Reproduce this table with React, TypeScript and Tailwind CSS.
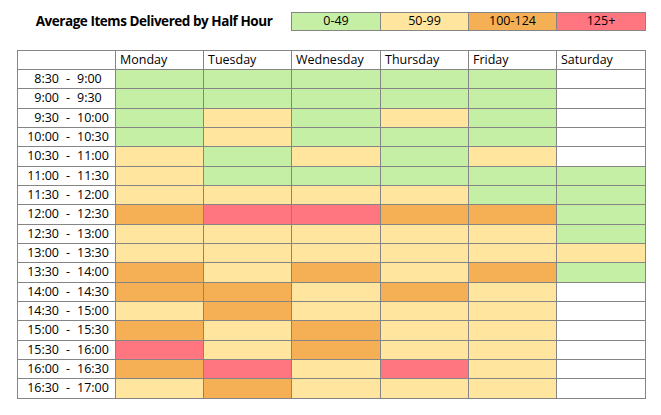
import React from 'react';

type Level = 'G' | 'Y' | 'O' | 'R' | 'W';

const fill: Record<Level, string> = {
  G: 'bg-[#c6efa6]',
  Y: 'bg-[#ffe59d]',
  O: 'bg-[#f5af55]',
  R: 'bg-[#ff7580]',
  W: 'bg-white',
};

const days = ['Monday', 'Tuesday', 'Wednesday', 'Thursday', 'Friday', 'Saturday'];

const rows: { from: string; to: string; cells: string }[] = [
  { from: '8:30', to: '9:00', cells: 'GGGGGW' },
  { from: '9:00', to: '9:30', cells: 'GGGGGW' },
  { from: '9:30', to: '10:00', cells: 'GYGYGW' },
  { from: '10:00', to: '10:30', cells: 'GYGGGW' },
  { from: '10:30', to: '11:00', cells: 'YGYGYW' },
  { from: '11:00', to: '11:30', cells: 'YGGGGG' },
  { from: '11:30', to: '12:00', cells: 'YYYYGG' },
  { from: '12:00', to: '12:30', cells: 'ORROOG' },
  { from: '12:30', to: '13:00', cells: 'YYYYYG' },
  { from: '13:00', to: '13:30', cells: 'YYYYYY' },
  { from: '13:30', to: '14:00', cells: 'OYOYOG' },
  { from: '14:00', to: '14:30', cells: 'OOYOYW' },
  { from: '14:30', to: '15:00', cells: 'YOYYYW' },
  { from: '15:00', to: '15:30', cells: 'OYOYYW' },
  { from: '15:30', to: '16:00', cells: 'RYOYYW' },
  { from: '16:00', to: '16:30', cells: 'ORYRYW' },
  { from: '16:30', to: '17:00', cells: 'YOYYYW' },
];

const legend: { label: string; level: Level }[] = [
  { label: '0-49', level: 'G' },
  { label: '50-99', level: 'Y' },
  { label: '100-124', level: 'O' },
  { label: '125+', level: 'R' },
];

const App: React.FC = () => {
  return (
    <div className="w-[661px] h-[415px] bg-white pt-[12px] pl-[17px] text-[12.5px] text-black font-['Open_Sans',sans-serif] leading-none">
      {/* title + legend */}
      <div className="flex h-[19px]">
        <div className="w-[274px] flex items-center justify-center font-bold text-[13.5px] tracking-[-0.45px]">
          Average Items Delivered by Half Hour
        </div>
        <div className="grid grid-cols-[88px_87px_87px_88px] gap-px p-px bg-[#858585]">
          {legend.map((l) => (
            <div key={l.label} className={`${fill[l.level]} flex items-center justify-center`}>
              {l.label}
            </div>
          ))}
        </div>
      </div>

      {/* schedule grid */}
      <div className="mt-[19px] w-[629px] h-[349px] grid grid-cols-[97px_87px_87px_88px_87px_87px_88px] grid-rows-[repeat(6,18px_18px_19px)] gap-px p-px bg-[#858585]">
        <div className="bg-white" />
        {days.map((d) => (
          <div key={d} className="bg-white flex items-center pl-[4px]">
            {d}
          </div>
        ))}
        {rows.map((r) => (
          <React.Fragment key={r.from}>
            <div className="bg-white flex items-center">
              <span className="w-[41px] text-right">{r.from}</span>
              <span className="w-[18px] text-center">-</span>
              <span>{r.to}</span>
            </div>
            {r.cells.split('').map((c, i) => (
              <div key={i} className={fill[c as Level]} />
            ))}
          </React.Fragment>
        ))}
      </div>
    </div>
  );
};

export default App;
